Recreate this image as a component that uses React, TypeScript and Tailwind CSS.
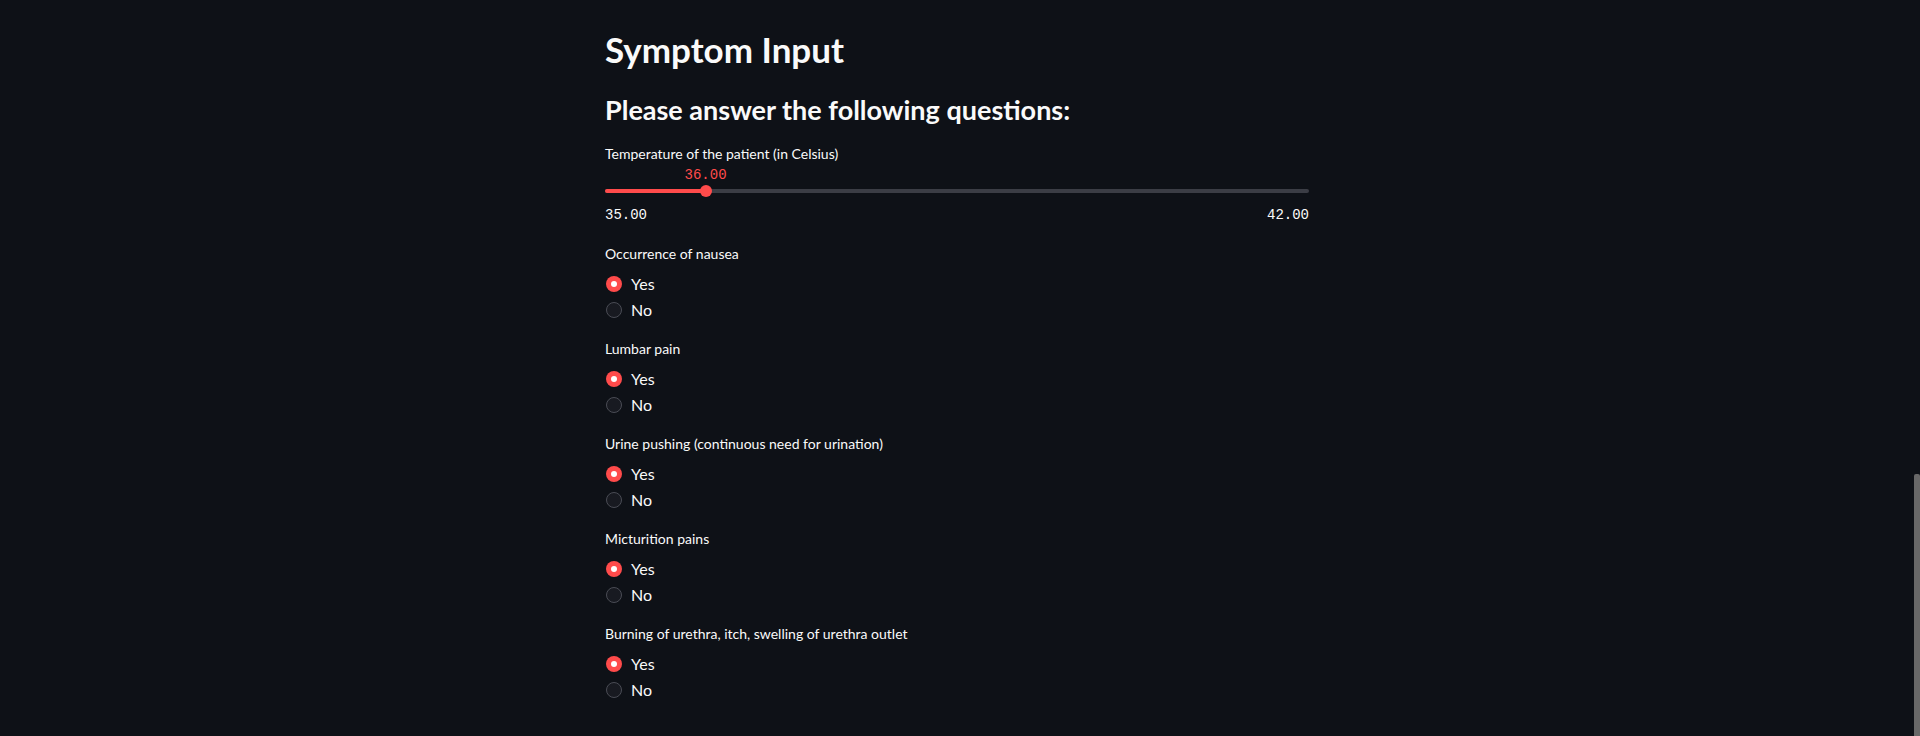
import React from "react";

const questions = [
  "Occurrence of nausea",
  "Lumbar pain",
  "Urine pushing (continuous need for urination)",
  "Micturition pains",
  "Burning of urethra, itch, swelling of urethra outlet",
];

const sans = "font-['Lato','Noto_Sans',sans-serif]";
const mono = "font-['Liberation_Mono',monospace]";

function Radio({ label, checked }: { label: string; checked: boolean }) {
  return (
    <div className="flex h-[26px] items-center gap-[9px] pl-[1px]">
      {checked ? (
        <span className="flex h-4 w-4 items-center justify-center rounded-full bg-[#ff4b4b]">
          <span className="h-[6px] w-[6px] rounded-full bg-white" />
        </span>
      ) : (
        <span className="h-4 w-4 rounded-full border border-[#4a4c55] bg-[#181a21]" />
      )}
      <span className="text-base text-[#fafafa]">{label}</span>
    </div>
  );
}

function Question({ label }: { label: string }) {
  return (
    <div className="mb-4">
      <div className="flex h-5 items-center text-sm text-[#fafafa]">{label}</div>
      <div className="mt-[7px]">
        <Radio label="Yes" checked />
        <Radio label="No" checked={false} />
      </div>
    </div>
  );
}

function TempSlider() {
  const min = 35;
  const max = 42;
  const value = 36;
  const pct = ((value - min) / (max - min)) * 100;

  return (
    <div>
      <div className="flex h-5 items-center text-sm text-[#fafafa]">
        Temperature of the patient (in Celsius)
      </div>
      {/* value bubble */}
      <div className="relative mt-[3px] h-4">
        <span
          className={`absolute top-0 -translate-x-1/2 text-sm leading-4 text-[#ff4b4b] ${mono}`}
          style={{ left: `${pct}%` }}
        >
          {value.toFixed(2)}
        </span>
      </div>
      {/* track */}
      <div className="relative mt-px flex h-[14px] items-center">
        <div className="h-1 w-full rounded-full bg-[#3b3d45]" />
        <div
          className="absolute left-0 h-1 rounded-full bg-[#ff4b4b]"
          style={{ width: `${pct}%` }}
        />
        <div
          className="absolute h-3 w-3 -translate-x-1/2 rounded-full bg-[#ff4b4b]"
          style={{ left: `${pct}%` }}
        />
      </div>
      <div className={`mt-[8px] flex h-[18px] items-center justify-between text-sm text-[#fafafa] ${mono}`}>
        <span>{min.toFixed(2)}</span>
        <span>{max.toFixed(2)}</span>
      </div>
    </div>
  );
}

export default function App() {
  return (
    <div className={`flex h-[736px] w-full overflow-hidden bg-[#0e1117] ${sans}`}>
      <main className="flex-1">
        <div className="mx-auto w-[704px] pt-[29px]">
          <h1 className="flex h-10 items-center text-[35px] font-bold text-[#fafafa]">
            Symptom Input
          </h1>
          <h3 className="mt-[25px] flex h-8 items-center text-[27px] font-bold text-[#fafafa]">
            Please answer the following questions:
          </h3>
          <div className="mt-[18px]">
            <TempSlider />
          </div>
          <div className="mt-5">
            {questions.map((q) => (
              <Question key={q} label={q} />
            ))}
          </div>
        </div>
      </main>
      {/* scrollbar */}
      <div className="flex w-[6px] flex-col">
        <div className="h-[474px]" />
        <div className="flex-1 rounded-t-[2px] bg-[#686868]" />
      </div>
    </div>
  );
}
